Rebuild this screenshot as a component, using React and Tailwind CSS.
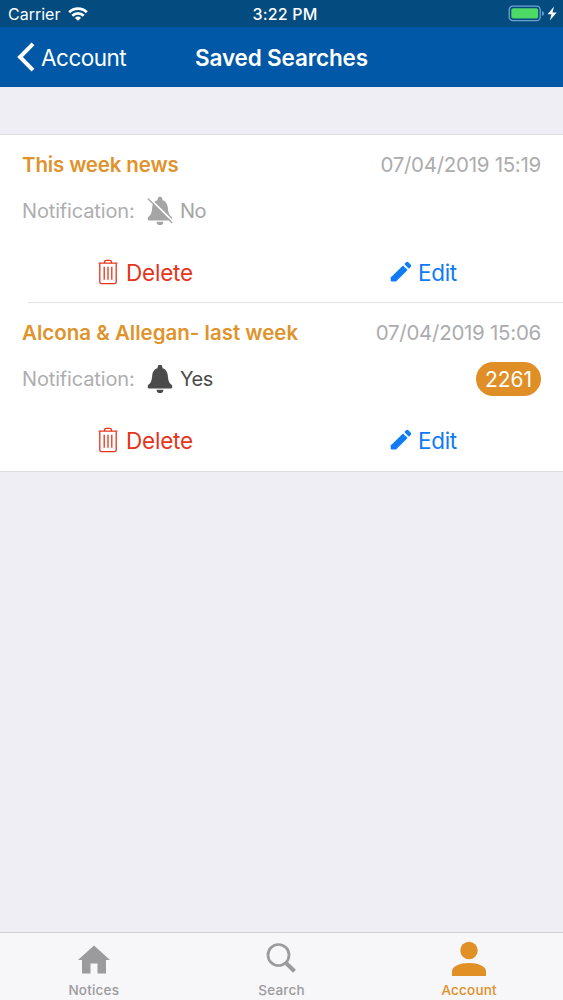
const SEARCHES = [
  { id: 1, title: 'This week news', date: '07/04/2019 15:19', notify: false, titleClass: 'tracking-[-0.15px]' },
  { id: 2, title: 'Alcona & Allegan- last week', date: '07/04/2019 15:06', notify: true, count: 2261, titleClass: '' },
]

function WifiIcon() {
  return (
    <svg className="w-[20px] h-[14px]" viewBox="0 0 20 14" fill="none" stroke="#fff" strokeWidth="2.7">
      <path d="M1.2 5.2a12.4 12.4 0 0 1 17.6 0" />
      <path d="M4.3 8.7a8 8 0 0 1 11.4 0" />
      <path d="M10 13.8 6.9 10.9a4.4 4.4 0 0 1 6.2 0z" fill="#fff" stroke="none" />
    </svg>
  )
}

function BatteryIcon() {
  return (
    <svg className="w-[51px] h-[17px]" viewBox="0 0 51 17" fill="none">
      <rect x="1.2" y="1.2" width="31" height="14.4" rx="3.6" stroke="#6fa3cf" strokeWidth="1.3" />
      <rect x="3.3" y="3.3" width="26.8" height="10.2" rx="1.8" fill="#4cd964" />
      <path d="M34 6v5q2-.8 2-2.5T34 6z" fill="#6fa3cf" />
      <path d="M46 1.6 39.6 9.3h3.9L41.8 15.4l6.9-8h-4.2z" fill="#fff" />
    </svg>
  )
}

function BellIcon({ muted }) {
  return (
    <svg className="w-[26px] h-[30px]" viewBox="0 0 26 30" fill="currentColor">
      <circle cx="13" cy="3.2" r="2.4" />
      <path d="M13 3.8c4.5 0 7.3 3 7.8 7.8.5 5.2.9 7.2 4.4 9.8v2.200q0 .8-1 .8H1.800q-1 0-1-.8v-2.200c3.500-2.600 3.900-4.600 4.400-9.800C5.700 6.800 8.500 3.800 13 3.800z" />
      <path d="M9.6 25.7h6.800a3.400 3.400 0 0 1-6.800 0z" />
      {muted && (
        <>
          <path d="M2 1.9 26 25.7" stroke="#fff" strokeWidth="2" />
          <path d="M.8 2.5 25.3 27" stroke="currentColor" strokeWidth="1.3" />
        </>
      )}
    </svg>
  )
}

function TrashIcon() {
  return (
    <svg className="w-[20px] h-[26px]" viewBox="0 0 20 26" fill="none" stroke="currentColor" strokeWidth="1.3">
      <path d="M.6 4.2h18.8M6.600 4V2.900q0-1.500 1.500-1.500h3.800q1.500 0 1.500 1.500V4" />
      <path d="M1.8 4.2v18.9q0 1.6 1.6 1.600h13.200q1.600 0 1.600-1.600V4.200" />
      <path d="M6.2 7.8v13M10 7.800v13M13.800 7.800v13" />
    </svg>
  )
}

function PencilIcon() {
  return (
    <svg className="w-[22px] h-[22px]" viewBox="0 0 22 22" fill="currentColor">
      <path d="M13 4.4 17.6 9 6 20.6H1.8q-1.100 0-1.100-1.100V16.500z" />
      <path d="M14.3 3.1 16.5 1q.8-.7 1.600 0l2.900 2.900q.7.800 0 1.600l-2.100 2.200z" />
    </svg>
  )
}

function SearchRow({ item }) {
  return (
    <li className="h-[168px]">
      <div className="flex items-center justify-between px-[22px] pt-[15px] h-[45px]">
        <span className={`font-semibold text-[20.5px] text-[#df932b] ${item.titleClass}`}>{item.title}</span>
        <span className="text-[20.5px] tracking-[-0.28px] text-[#acacae]">{item.date}</span>
      </div>
      <div className="flex items-center h-[34px] mt-[14px] px-[22px] text-[20px] text-[#aeaeb0]">
        <span className="w-[125px] tracking-[-0.15px]">Notification:</span>
        <span className={`flex items-center gap-[7px] ${item.notify ? 'text-[#4b4b4b]' : 'text-[#a5a5a5]'}`}>
          <BellIcon muted={!item.notify} />
          <span className="tracking-[-0.5px]">{item.notify ? 'Yes' : 'No'}</span>
        </span>
        {item.count && (
          <span className="ml-auto flex items-center justify-center w-[65px] h-[34px] pt-px rounded-full bg-[#df8f26] text-white text-[21px]">
            {item.count}
          </span>
        )}
      </div>
      <div className="flex items-center mt-[28px] h-[32px] text-[22.5px]">
        <button className="flex items-center gap-[8px] ml-[98px] w-[292px] text-[#e5341c] tracking-[-0.2px]">
          <TrashIcon />
          <span className="pt-px">Delete</span>
        </button>
        <button className="flex items-center gap-[6px] text-[#0f7bf5] tracking-[-0.3px]">
          <PencilIcon />
          <span className="pt-px">Edit</span>
        </button>
      </div>
    </li>
  )
}

function Tab({ label, active, children }) {
  return (
    <button className={`flex-1 flex flex-col items-center text-[13.5px] font-medium tracking-[0.2px] ${active ? 'text-[#e19026]' : 'text-[#9b9b9d]'}`}>
      <span className="h-[48px] pt-[7px]">{children}</span>
      <span className="leading-[18px]">{label}</span>
    </button>
  )
}

export default function App() {
  return (
    <div className="w-[563px] h-[1000px] flex flex-col overflow-hidden bg-[#efeef4] font-['Inter','Liberation_Sans',sans-serif] whitespace-nowrap">
      <div className="h-[27px] grid grid-cols-3 items-center bg-[#044b80] text-white text-[16px]">
        <div className="flex items-center gap-[8px] pl-[8px]">
          <span className="pt-px">Carrier</span>
          <WifiIcon />
        </div>
        <span className="text-center font-medium pl-[7px] pt-px tracking-[0.2px]">3:22 PM</span>
        <div className="flex justify-end pr-[4px]">
          <BatteryIcon />
        </div>
      </div>

      <header className="h-[60px] flex items-center bg-[#0058a6] text-white">
        <button className="flex items-center gap-[6px] pl-[17px] w-[195px] text-[22.5px] tracking-[-0.5px]">
          <svg className="w-[18px] h-[30px]" viewBox="0 0 18 30" fill="none" stroke="#fff" strokeWidth="4">
            <path d="M16 1.9 3 15l13 13.1" />
          </svg>
          <span className="pt-px">Account</span>
        </button>
        <h1 className="text-[22.5px] font-semibold tracking-[-0.15px] pt-px">Saved Searches</h1>
      </header>

      <main className="flex-1 pt-[47px]">
        <ul className="bg-white border-y border-[#dddce1] h-[338px]">
          <SearchRow item={SEARCHES[0]} />
          <li className="-mt-px ml-[28px] h-px bg-[#e2e2e4]" />
          <SearchRow item={SEARCHES[1]} />
        </ul>
      </main>

      <nav className="h-[68px] flex bg-[#f7f6f9] border-t border-[#d0cfd4]">
        <Tab label="Notices">
          <svg className="w-[34px] h-[40px]" viewBox="0 0 34 40" fill="currentColor">
            <path d="M17 5.5 33 20h-4v13.500h-8.500V23.500h-7v10H5V20H1z" />
          </svg>
        </Tab>
        <Tab label="Search">
          <svg className="w-[34px] h-[40px]" viewBox="0 0 34 40" fill="none" stroke="currentColor">
            <circle cx="13.5" cy="15" r="10.5" strokeWidth="2.7" />
            <path d="m20.5 22.5 2.5 2.5" strokeWidth="2.6" />
            <path d="m21.5 23.5 8 7.800" strokeWidth="4" />
          </svg>
        </Tab>
        <Tab label="Account" active>
          <svg className="w-[34px] h-[40px]" viewBox="0 0 34 40" fill="currentColor">
            <circle cx="17" cy="10.5" r="8.7" />
            <path d="M0 36v-4.5C0 26 8 23 17 23s17 3 17 8.500V36z" />
          </svg>
        </Tab>
      </nav>
    </div>
  )
}
